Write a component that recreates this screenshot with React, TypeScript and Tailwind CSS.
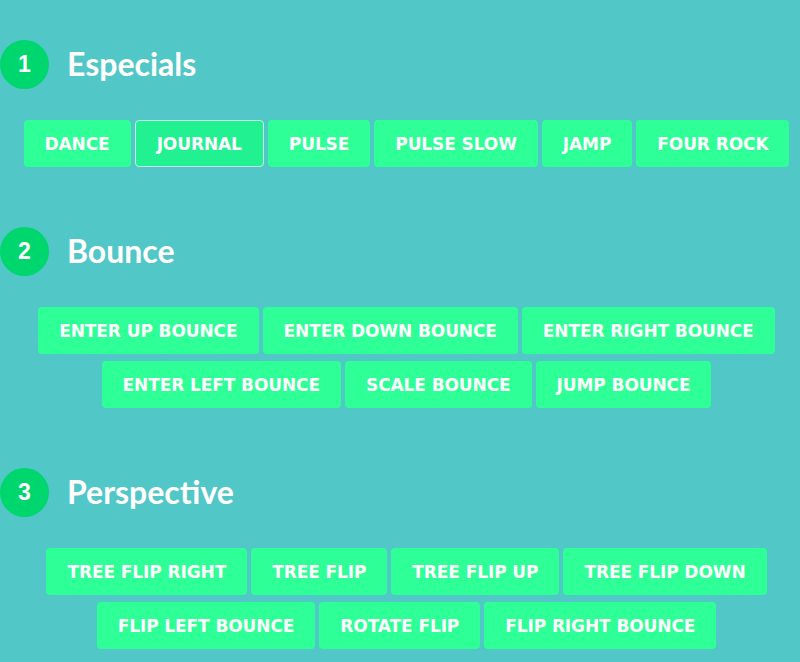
const sections = [
  {
    num: '1',
    title: 'Especials',
    items: ['DANCE', 'JOURNAL', 'PULSE', 'PULSE SLOW', 'JAMP', 'FOUR ROCK'],
    active: 'JOURNAL',
  },
  {
    num: '2',
    title: 'Bounce',
    items: [
      'ENTER UP BOUNCE',
      'ENTER DOWN BOUNCE',
      'ENTER RIGHT BOUNCE',
      'ENTER LEFT BOUNCE',
      'SCALE BOUNCE',
      'JUMP BOUNCE',
    ],
  },
  {
    num: '3',
    title: 'Perspective',
    items: [
      'TREE FLIP RIGHT',
      'TREE FLIP',
      'TREE FLIP UP',
      'TREE FLIP DOWN',
      'FLIP LEFT BOUNCE',
      'ROTATE FLIP',
      'FLIP RIGHT BOUNCE',
    ],
  },
];

function Section({ num, title, items, active }: { num: string; title: string; items: string[]; active?: string }) {
  return (
    <section className="mb-[60px]">
      <div className="flex items-center gap-[18px]">
        <div className="flex h-[49px] w-[49px] items-center justify-center rounded-full bg-[#00d66e] text-[23px] font-bold text-white [font-family:'Liberation_Sans',Arial,sans-serif]">
          {num}
        </div>
        <h2 className="text-[32px] font-bold text-white [font-family:Lato,sans-serif] leading-none -mt-[2px]">
          {title}
        </h2>
      </div>
      <div className="mt-[31px] flex flex-wrap justify-center gap-x-1 gap-y-[7px] pl-[13px]">
        {items.map((item) => (
          <button
            key={item}
            className={
              'h-[47px] rounded-[4px] px-[21px] pt-[2px] text-[17px] font-bold tracking-[-0.1px] text-white [font-family:"DejaVu_Sans",sans-serif] ' +
              (item === active
                ? 'border border-[#c6f3e4] bg-[#22f191]'
                : 'bg-[#2eff96]')
            }
          >
            {item}
          </button>
        ))}
      </div>
    </section>
  );
}

export default function App() {
  return (
    <div className="min-h-[662px] w-[800px] overflow-hidden bg-[#52c7c7] pt-10">
      {sections.map((s) => (
        <Section key={s.num} {...s} />
      ))}
    </div>
  );
}
